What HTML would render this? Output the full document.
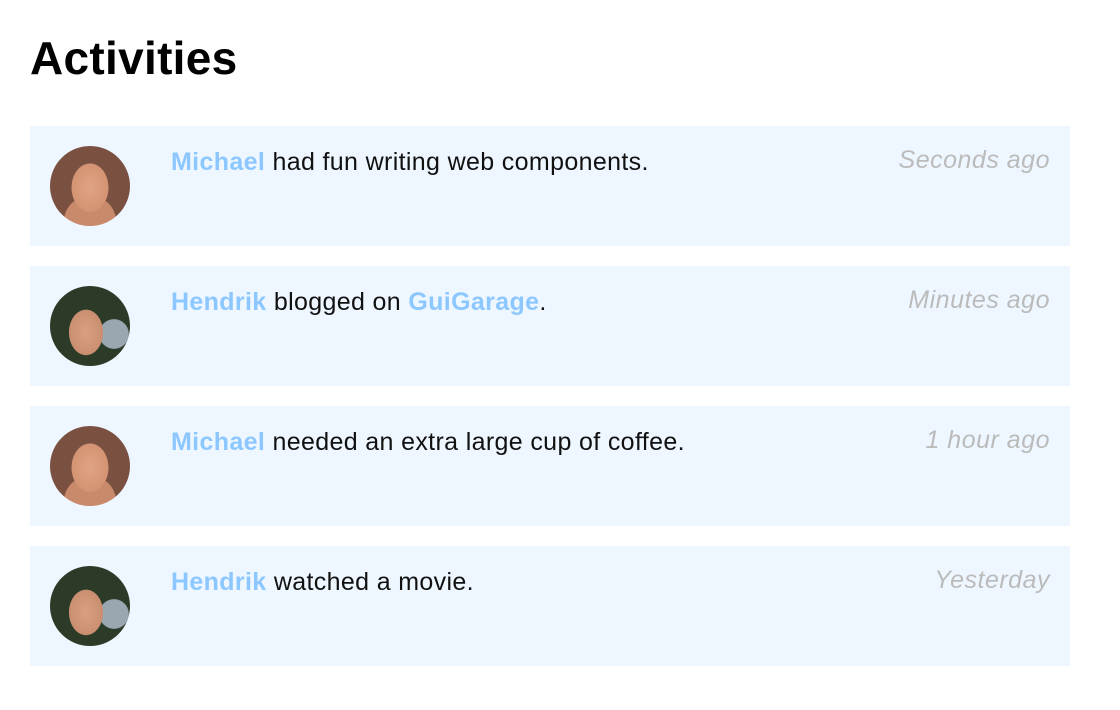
<!DOCTYPE html>
<html><head><meta charset="utf-8"><style>
body{margin:0;background:#fff;font-family:"Liberation Sans",Arial,sans-serif;width:1120px;height:710px;overflow:hidden}
h1{position:absolute;left:30px;top:28px;margin:0;font-size:46px;font-weight:bold;color:#000;line-height:60px;letter-spacing:0.3px}
.card{position:absolute;left:30px;width:1040px;height:120px;background:#eef7ff}
.av{position:absolute;left:20px;top:20px;width:80px;height:80px;border-radius:50%;overflow:hidden}
.m{background:radial-gradient(ellipse 26px 34px at 50% 52%,#e0a383 0,#d49474 70%,transparent 72%),radial-gradient(circle at 50% 95%,#c88a6a 0 30%,transparent 31%),#7a5040}
.h{background:radial-gradient(ellipse 24px 32px at 45% 58%,#d8a080 0,#c98f70 70%,transparent 72%),radial-gradient(circle at 80% 60%,#9aa7b0 0 18%,transparent 19%),#2c3a28}
.t{position:absolute;left:141px;top:21px;font-size:25px;color:#111;line-height:30px;letter-spacing:0.35px}
.t b{color:#8cc8ff}
.time{position:absolute;right:20px;top:19px;font-size:25px;font-style:italic;color:#bbb;line-height:30px;letter-spacing:0.5px}
</style></head><body>
<h1>Activities</h1>
<div class="card" style="top:126px"><div class="av m"></div><div class="t"><b>Michael</b> had fun writing web components.</div><div class="time">Seconds ago</div></div>
<div class="card" style="top:266px"><div class="av h"></div><div class="t"><b>Hendrik</b> blogged on <b>GuiGarage</b>.</div><div class="time">Minutes ago</div></div>
<div class="card" style="top:406px"><div class="av m"></div><div class="t"><b>Michael</b> needed an extra large cup of coffee.</div><div class="time">1 hour ago</div></div>
<div class="card" style="top:546px"><div class="av h"></div><div class="t"><b>Hendrik</b> watched a movie.</div><div class="time">Yesterday</div></div>
</body></html>
